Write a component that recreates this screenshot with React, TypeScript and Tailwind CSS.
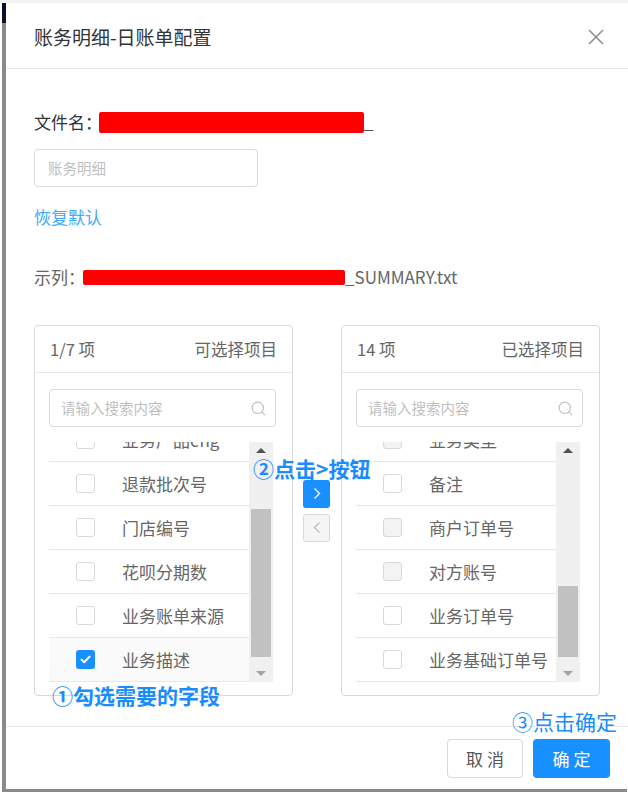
import { Search } from 'lucide-react';

type Item = { label: string; checked?: boolean; disabled?: boolean; active?: boolean };

const leftItems: Item[] = [
  { label: '业务产品eng' },
  { label: '退款批次号' },
  { label: '门店编号' },
  { label: '花呗分期数' },
  { label: '业务账单来源' },
  { label: '业务描述', checked: true, active: true },
];

const rightItems: Item[] = [
  { label: '业务类型', disabled: true },
  { label: '备注' },
  { label: '商户订单号', disabled: true },
  { label: '对方账号', disabled: true },
  { label: '业务订单号' },
  { label: '业务基础订单号' },
];

function Checkbox({ checked, disabled }: { checked?: boolean; disabled?: boolean }) {
  if (checked) {
    return (
      <span className="w-[19px] h-[19px] rounded-[3px] bg-[#1890ff] flex items-center justify-center shrink-0">
        <svg width="11" height="9" viewBox="0 0 11 9" fill="none">
          <path d="M1.5 4.6 4.2 7.2 9.6 1.6" stroke="white" strokeWidth="2" strokeLinecap="round" strokeLinejoin="round" />
        </svg>
      </span>
    );
  }
  return (
    <span
      className={
        disabled
          ? 'w-[19px] h-[19px] rounded-[3px] border border-[#d9d9d9] bg-[#f3f3f3] shrink-0'
          : 'w-[19px] h-[19px] rounded-[3px] border border-[#d9d9d9] bg-white shrink-0'
      }
    />
  );
}

function Scrollbar({ thumbClass }: { thumbClass: string }) {
  return (
    <div className="w-[24px] h-[240px] bg-[#f0f0f0] flex flex-col shrink-0">
      <div className="h-[17px] flex items-center justify-center">
        <span className="w-0 h-0 border-x-[5px] border-x-transparent border-b-[5px] border-b-[#505050]" />
      </div>
      <div className="flex-1 flex flex-col">
        <div className={thumbClass} />
      </div>
      <div className="h-[17px] flex items-center justify-center">
        <span className="w-0 h-0 border-x-[5px] border-x-transparent border-t-[5px] border-t-[#a3a3a3]" />
      </div>
    </div>
  );
}

function Panel({
  count,
  title,
  items,
  thumbClass,
}: {
  count: string;
  title: string;
  items: Item[];
  thumbClass: string;
}) {
  return (
    <div className="w-[259px] h-[371px] border border-[#d9d9d9] rounded-[4px] flex flex-col shrink-0">
      <div className="h-[47px] border-b border-[#e8e8e8] flex items-center justify-between px-[15px] text-[16.5px] text-[#666] leading-[22px]">
        <span>{count}</span>
        <span>{title}</span>
      </div>
      <div className="pl-[14px] pr-[16px] pt-[16px]">
        <div className="h-[38px] border border-[#d9d9d9] rounded-[4px] flex items-center justify-between pl-[11px] pr-[8px]">
          <span className="text-[14.5px] text-[#bfbfbf]">请输入搜索内容</span>
          <Search className="w-[17px] h-[17px] text-[#bfbfbf]" strokeWidth={1.6} />
        </div>
      </div>
      <div className="pl-[14px] pr-[19px] mt-[15px] flex">
        <div className="flex-1 h-[241px] overflow-hidden">
          <div className="-mt-[24px]">
            {items.map((it) => (
              <div
                key={it.label}
                className={
                  it.active
                    ? 'h-[44px] border-b border-[#e8e8e8] bg-[#fafafa] flex items-center pl-[27px]'
                    : 'h-[44px] border-b border-[#e8e8e8] flex items-center pl-[27px]'
                }
              >
                <Checkbox checked={it.checked} disabled={it.disabled} />
                <span className="ml-[27px] text-[17px] text-[#666] leading-[22px] whitespace-nowrap">{it.label}</span>
              </div>
            ))}
          </div>
        </div>
        <Scrollbar thumbClass={thumbClass} />
      </div>
    </div>
  );
}

export default function App() {
  return (
    <div className="w-[628px] h-[793px] bg-white relative overflow-hidden font-['Noto_Sans_CJK_SC',sans-serif]">
      <div className="h-[3px] bg-[#f2f3f5]" />
      <div className="flex h-[786px]">
        <div className="w-[2px]" />
        <div className="w-[4px] flex flex-col">
          <div className="h-[20px] bg-[#0b1030]" />
          <div className="flex-1 bg-[#8a8a8a]" />
        </div>
        <div className="flex-1 flex flex-col relative">
          {/* Header */}
          <div className="h-[66px] border-b border-[#e8e8e8] flex items-center justify-between pl-[28px] pr-[24px] pt-[2px]">
            <span className="text-[19px] text-[#333] leading-[26px]">账务明细-日账单配置</span>
            <svg width="16" height="16" viewBox="0 0 16 16" fill="none">
              <path d="M1 1 15 15M15 1 1 15" stroke="#8c8c8c" strokeWidth="1.5" />
            </svg>
          </div>

          {/* Body */}
          <div className="pl-[28px] flex flex-col">
            <div className="mt-[42px] h-[22px] flex items-center text-[17px] text-[#333] leading-[22px]">
              <span>文件名：</span>
              <span className="-ml-[3px] w-[265px] h-[21px] bg-[#ff0000] rounded-[2px]" />
              <span className="text-[#555]">_</span>
            </div>
            <div className="mt-[16px] w-[224px] h-[38px] border border-[#d9d9d9] rounded-[4px] flex items-center pl-[13px]">
              <span className="text-[14.5px] text-[#bfbfbf]">账务明细</span>
            </div>
            <div className="mt-[19px] h-[22px] text-[17px] text-[#40a9ff] leading-[22px]">恢复默认</div>
            <div className="mt-[38px] h-[22px] flex items-center text-[17px] text-[#666] leading-[22px]">
              <span>示列：</span>
              <span className="-ml-[2px] w-[262px] h-[15px] bg-[#ff0000] rounded-[2px]" />
              <span>_SUMMARY.txt</span>
            </div>

            {/* Transfer */}
            <div className="mt-[37px] flex items-center">
              <Panel
                count="1/7 项"
                title="可选择项目"
                items={leftItems}
                thumbClass="mx-[2px] mt-[50px] h-[148px] bg-[#c1c1c1]"
              />
              <div className="mx-[10px] w-[27px] flex flex-col gap-[6px]">
                <div className="h-[28px] rounded-[3px] bg-[#1890ff] flex items-center justify-center">
                  <svg width="8" height="13" viewBox="0 0 8 13" fill="none">
                    <path d="M1.5 1.5 6.5 6.5 1.5 11.5" stroke="white" strokeWidth="1.4" />
                  </svg>
                </div>
                <div className="h-[28px] rounded-[3px] bg-[#f5f5f5] border border-[#d9d9d9] flex items-center justify-center">
                  <svg width="8" height="13" viewBox="0 0 8 13" fill="none">
                    <path d="M6.5 1.5 1.5 6.5 6.5 11.5" stroke="#bfbfbf" strokeWidth="1.4" />
                  </svg>
                </div>
              </div>
              <div className="ml-[1px]">
                <Panel
                  count="14 项"
                  title="已选择项目"
                  items={rightItems}
                  thumbClass="mx-[2px] mt-[127px] h-[71px] bg-[#c1c1c1]"
                />
              </div>
            </div>
          </div>

          {/* Footer */}
          <div className="mt-[30px] border-t border-[#e8e8e8] flex justify-end gap-[10px] pr-[18px] pt-[12px]">
            <button className="w-[76px] h-[39px] border border-[#d9d9d9] rounded-[4px] bg-white text-[17px] text-[#555] tracking-[4px] pl-[4px]">
              取消
            </button>
            <button className="w-[77px] h-[39px] rounded-[4px] bg-[#1890ff] text-[17px] text-white tracking-[4px] pl-[4px]">
              确定
            </button>
          </div>

          {/* Annotations */}
          <div className="absolute left-[247px] top-[451px] text-[21px] font-bold text-[#1a8cff] leading-[28px] whitespace-nowrap">
            ②点击&gt;按钮
          </div>
          <div className="absolute left-[46px] top-[678px] text-[21px] font-bold text-[#1a8cff] leading-[28px] whitespace-nowrap">
            ①勾选需要的字段
          </div>
          <div className="absolute left-[506px] top-[704px] text-[21px] text-[#1a8cff] leading-[28px] whitespace-nowrap">
            ③点击确定
          </div>
        </div>
      </div>
      <div className="absolute left-[2px] right-[1px] top-[789px] h-[3px] bg-[#8a8a8a]" />
    </div>
  );
}
